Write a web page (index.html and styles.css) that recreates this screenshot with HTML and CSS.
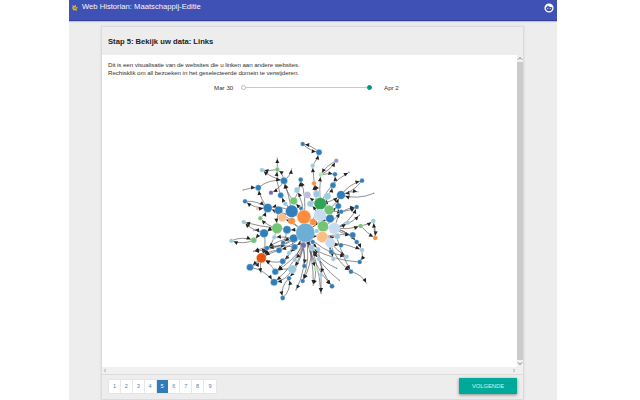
FILE: index.html
```html
<!DOCTYPE html>
<html lang="nl">
<head>
<meta charset="utf-8">
<title>Web Historian: Maatschappij-Editie</title>
<link rel="stylesheet" href="styles.css">
</head>
<body>
<div class="app">
  <header class="bar">
    <svg class="logo" viewBox="0 0 8 8"><path d="M1 1l2 1 2-1 0 2 2 .5-1.500 1.500.5 2-2-1-2 .5V5L.5 4 2 3z" fill="#d8bd32"/><path d="M2.500 4h3" stroke="#5d6535"/></svg>
    <h1>Web Historian: Maatschappij-Editie</h1>
    <svg class="face" viewBox="0 0 24 24"><path fill="#fff" d="M9 11.750a1.250 1.250 0 1 0 0 2.500 1.250 1.250 0 0 0 0-2.500zm6 0a1.250 1.250 0 1 0 0 2.500 1.250 1.250 0 0 0 0-2.500zM12 1a11 11 0 1 0 0 22 11 11 0 0 0 0-22zm0 19c-4.410 0-8-3.590-8-8 0-.29.020-.58.050-.86 2.360-1.050 4.230-2.980 5.210-5.370a9.970 9.970 0 0 0 10.410 3.970A8 8 0 0 1 12 20z"/></svg>
  </header>
  <main class="card">
    <h2>Stap 5: Bekijk uw data: Links</h2>
    <div class="view">
      <div class="content">
        <p>Dit is een visualisatie van de websites die u linken aan andere websites.<br>Rechtsklik om all bezoeken in het geselecteerde domein te verwijderen.</p>
        <div class="range"><span>Mar 30</span><div class="track"><i class="knob"></i><i class="line"></i><i class="knob end"></i></div><span>Apr 2</span></div>
        <svg class="graph" id="graph" viewBox="220 130 170 180"></svg>
      </div>
      <div class="vscroll">
        <svg viewBox="0 0 6 7"><path d="M1 4.500l2-2 2 2" /></svg>
        <div class="thumb"></div>
        <svg viewBox="0 0 6 7"><path d="M1 2.500l2 2 2-2" /></svg>
      </div>
      <div class="hscroll">
        <svg viewBox="0 0 6 7"><path d="M4 2l-2 1.500 2 1.500" /></svg>
        <svg viewBox="0 0 6 7"><path d="M2 2l2 1.500-2 1.500" /></svg>
      </div>
    </div>
    <footer>
      <nav class="pages"><a>1</a><a>2</a><a>3</a><a>4</a><a class="on">5</a><a>6</a><a>7</a><a>8</a><a>9</a></nav>
      <button>VOLGENDE</button>
    </footer>
  </main>
</div>
<script src="graph.js"></script>
</body>
</html>
```
FILE: styles.css
```css
* { box-sizing: border-box; }
body { margin: 0; background: #fff; font-family: "Liberation Sans", Arial, sans-serif; color: #333; height: 400px; overflow: hidden; }
.app { width: 488px; height: 400px; margin-left: 69px; background: #ededed; overflow: hidden; }
.bar { height: 21px; background: #3f51b5; border-bottom: 1px solid #3140a4; box-shadow: 0 1px 1px #bfc2d2; display: flex; align-items: flex-start; padding: 3px 3px 0 2px; }
.logo { width: 8px; height: 8px; margin-top: 1px; }
h1 { margin: -1px 0 0 3px; font-size: 7.650px; line-height: 10px; font-weight: 400; color: #f4f5ff; white-space: nowrap; }
.face { width: 10px; height: 10px; margin-left: auto; }
.card { width: 421px; height: 372px; margin: 6px 0 0 33px; box-shadow: 0 0 2px 1px #d3d3d3; display: flex; flex-direction: column; background: #ededed; }
h2 { margin: 0; height: 28px; flex: none; padding: 1px 0 0 6px; font-size: 7.650px; line-height: 27px; font-weight: 700; color: #222; }
.view { height: 320px; flex: none; display: grid; grid-template-columns: 415px 6px; grid-template-rows: 312px 7px; background: #fff; border-bottom: 1px solid #dcdcdc; }
.content { overflow: hidden; display: flex; flex-direction: column; }
p { margin: 6px 0 0 6px; font-size: 6.200px; line-height: 8px; letter-spacing: -.078px; white-space: nowrap; }
.range { display: flex; align-items: center; height: 8px; flex: none; margin: 6px 0 0 112px; font-size: 6.200px; }
.range span:first-child { width: 27px; }
.track { display: flex; align-items: center; width: 131px; margin-right: 12px; }
.knob { width: 5px; height: 5px; border: 1px solid #bdbdbd; border-radius: 50%; background: #fff; }
.knob.end { background: #009688; border-color: #009688; }
.line { flex: 1; height: 1px; background: #c8c8c8; }
.graph { width: 170px; height: 180px; flex: none; margin: 39px 0 0 118px; }
.edge { fill: none; stroke: #555; stroke-width: .65; }
.vscroll { display: flex; flex-direction: column; background: #f0f0f0; grid-row: 1; grid-column: 2; }
.vscroll svg, .hscroll svg { width: 6px; height: 7px; fill: none; stroke: #555; stroke-width: .8; }
.thumb { flex: 1; background: #cbcbcb; }
.hscroll { display: flex; justify-content: space-between; background: #f0f0f0; grid-row: 2; grid-column: 1 / 3; padding-right: 6px; }
.hscroll svg { stroke: #aaa; }
footer { flex: 1; display: flex; justify-content: space-between; align-items: flex-start; padding: 3px 6px 0; }
.pages { display: flex; margin: 2px 0 0 1px; height: 13px; background: #fff; box-shadow: 0 0 0 .5px #ddd; }
.pages a { width: 11.900px; text-align: center; font-size: 5.600px; line-height: 13px; color: #4b86bb; border-right: 1px solid #e8e8e8; }
.pages a:last-child { border: 0; }
.pages .on { background: #337ab7; color: #fff; border-color: #337ab7; }
button { width: 58px; height: 16px; border: 0; padding: 0; background: #00a99a; color: #d6f3ef; font: 5.800px/16px "Liberation Sans", Arial, sans-serif; box-shadow: 0 1px 3px #888; }
```
FILE: graph.js
```js
const palette = {
  b: '#2f7fbd', l: '#9ecae1', g: '#74c476', p: '#756bb1', q: '#9e8fce',
  o: '#fd8d3c', a: '#fdbe85', r: '#e6550d', d: '#31a354', v: '#bcbddc',
  w: '#c6dbef', e: '#b9e5ae', m: '#6baed6'
};

// x, y, radius, colour
const nodes = `302.7,144,2,b 319,152.3,2.8,b 312.7,165.7,2,l 336.3,160.7,2,q 261.9,170,2,l 277.3,169.5,2,g
277.3,157.7,.8,l 291.7,168.5,.8,l 284,180.7,3.3,b 300.7,179.7,2.1,b 258.3,187.7,2.7,b 243.3,190,.8,b 271,192.7,2,p
280.7,195.3,2.7,b 297,190,2.7,l 293.7,201,3.6,g 245,201.3,2.1,b 267.7,208,4.2,b 278.7,210.3,3.8,b 256.7,209,.7,o
285.3,203.7,2,l 301,208.3,1.7,b 260.3,218.3,2,g 320.7,174.7,2,e 314,183.3,2,o 335,174.3,2.1,b 349,172.3,.8,b
362,180.7,2.1,b 333,185.3,2.7,b 358.3,191.7,.8,l 373.7,193.3,.8,b 341,195,4.1,b 307.3,195,3.3,v 316.7,194,3.3,l
327.3,196.3,3.3,l 310.3,203.7,3,l 338.3,206,2.8,b 356.7,207,2.1,b 341.3,211.7,2,b 359.3,215.3,.8,b 373.3,221,2.1,l
330,218.5,4,b 243.7,222,2,l 277,228.3,5.100,g 264,233.3,4,b 231.3,240.7,2,l 253.7,240.3,2.7,g 253.7,230,.8,b
287,229.7,3.7,b 291.7,221,3.3,o 293.7,238.3,3.9,b 274.3,237.3,2,l 267,248,2.1,b 279,250.3,2.7,b 283,242.7,2,b
294.7,247,2.8,b 303.3,245.3,2.7,p 253.7,251.3,.8,b 261.3,258,4.7,r 250,267.3,3.3,b 282.7,261.3,2.7,b 289,253,2,l
294.7,259.7,2,l 292.3,269.3,4,l 275.3,271.7,3,b 274,282.3,3.3,b 289,278.3,2.1,b 282.7,298,2.2,b 296,290,.8,b
302.7,281,2,b 304.3,266,2,b 261,273.3,.6,l 347.7,222.7,2,l 360.7,226,2.1,g 375.3,238,2.1,o 352.7,235,2.8,b
356.7,242,2.1,b 337.3,236.3,2.7,l 362,250,2.1,l 359.7,262,2.1,b 341,245.3,2.1,b 331,251.7,2.1,b 346.7,256.7,2,l
333.3,259,2,l 351,271.7,2.1,b 366.7,283.7,.8,l 336.7,268.3,.8,b 339.3,280.3,.8,b 332,286.3,2.2,b 321,275,2,l
321,293.3,.8,p 315.7,268.7,2,e 313.3,285.3,.8,g 311.7,248,2.7,l 318.7,259,2,l 318.3,249.3,2,l 312.7,242,2,b
316.7,231,2,l 282.3,217.5,4,a 291.7,211.3,6,b 304,217,6.700,o 313,222,3.2,o 320.3,203.7,6,d 329,210,4.600,g
320,215.3,5.800,w 323,226.3,5.200,g 334.3,228.3,5.500,w 322.3,237,5.400,a 330,242.7,4.700,w 305.3,232.7,9.2,m`
  .split(/\s+/).map(s => s.split(','));

// x1, y1, x2, y2, bend
const edges = `302.7,144,319,152.3,2 319,152.3,302.7,144,2 312.7,165.7,319,152.3,1 316.7,194,312.7,165.7,-1
320.7,174.7,336.3,160.7,2 336.3,160.7,320.7,174.7,2 320.7,174.7,335,174.3,-1 320.3,203.7,320.7,174.7,-1
284,180.7,261.9,170,-2 277.3,169.5,261.9,170,-1 277.3,169.5,277.3,157.7,0 284,180.7,277.3,169.5,2 291.7,211.3,277.3,169.5,-7
284,180.7,291.7,168.5,2 291.7,211.3,284,180.7,1 258.3,187.7,284,180.7,-4 243.3,190,258.3,187.7,-1 284,180.7,271,192.7,-2
267.7,208,258.3,187.7,-2 245,201.3,267.7,208,-3 267.7,208,245,201.3,-3 256.7,209,267.7,208,0 260.3,218.3,267.7,208,1
291.7,211.3,280.7,195.3,-1 293.7,201,284,180.7,-2 293.7,201,300.7,179.7,2 304,217,300.7,179.7,3 304,217,297,190,2
304,217,293.7,201,1 316.7,194,314,183.3,1 323,226.3,314,183.3,-2 327.3,196.3,333,185.3,1 333,185.3,335,174.3,1
320.3,203.7,349,172.3,-5 341,195,362,180.7,-3 362,180.7,341,195,-3 341,195,358.3,191.7,-2 373.7,193.3,341,195,-4
320.3,203.7,341,195,2 329,210,338.3,206,1 334.3,228.3,338.3,206,2 341.3,211.7,356.7,207,-1 329,210,356.7,207,4
334.3,228.3,356.7,207,5 334.3,228.3,359.3,215.3,3 323,226.3,341.3,211.7,2 323,226.3,327.3,196.3,0 305.3,232.7,320.3,203.7,1
334.3,228.3,347.7,222.7,1 334.3,228.3,360.7,226,2 360.7,226,373.3,221,1 373.3,221,375.3,238,-1 375.3,238,373.3,221,0 360.7,226,375.3,238,1
334.3,228.3,352.7,235,2 322.3,237,352.7,235,-2 334.3,228.3,356.7,242,-3 334.3,228.3,362,250,-6 330,242.7,362,250,-2
362,250,359.7,262,-2 359.7,262,311.7,248,-4 322.3,237,341,245.3,2 330,242.7,346.7,256.7,1 305.3,232.7,346.7,256.7,6
322.3,237,331,251.7,-2 322.3,237,333.3,259,-2 334.3,228.3,351,271.7,2 351,271.7,366.7,283.7,-3 330,242.7,351,271.7,4
336.7,268.3,311.7,248,-3 339.3,280.3,311.7,248,-3 318.3,249.3,332,286.3,4 305.3,232.7,332,286.3,6 318.7,259,321,275,-2
321,275,321,293.3,0 305.3,232.7,321,293.3,-4 305.3,232.7,315.7,268.7,1 315.7,268.7,313.3,285.3,-1 305.3,232.7,313.3,285.3,-3
305.3,232.7,302.7,281,-5 303.3,245.3,304.3,266,-1 303.3,245.3,296,290,-5 311.7,248,302.7,281,-3 305.3,232.7,289,278.3,-5
303.3,245.3,292.3,269.3,-2 294.7,247,282.7,261.3,-1 293.7,238.3,275.3,271.7,-5 303.3,245.3,275.3,271.7,-3
292.3,269.3,275.3,271.7,2 292.3,269.3,274,282.3,-4 305.3,232.7,274,282.3,-7 289,278.3,282.7,298,4 282.7,298,289,278.3,4
250,267.3,274,282.3,-4 275.3,271.7,261.3,258,2 261.3,258,250,267.3,0 250,267.3,261.3,258,2 282.7,261.3,261.3,258,-3
279,250.3,261.3,258,1 279,250.3,261.3,258,3 267,248,261.3,258,1 264,233.3,261.3,258,-3 277,228.3,261.3,258,-3
261.3,258,261,273.3,1 305.3,232.7,279,250.3,-3 305.3,232.7,267,248,-4 287,229.7,279,250.3,-2
293.7,238.3,267,248,3 294.7,247,253.7,251.3,4 293.7,238.3,253.7,251.3,-4 293.7,238.3,274.3,237.3,1
231.3,240.7,253.7,240.3,-3 253.7,240.3,231.3,240.7,-3 264,233.3,253.7,240.3,1 264,233.3,253.7,230,1 264,233.3,243.7,222,-2
277,228.3,243.7,222,-1 277,228.3,260.3,218.3,-2 277,228.3,264,233.3,1 287,229.7,264,233.3,4 278.7,210.3,277,228.3,1
305.3,232.7,282.3,217.5,1 305.3,232.7,278.7,210.3,0 291.7,211.3,267.7,208,3 304,217,267.7,208,-2 305.3,232.7,293.7,238.3,1
305.3,232.7,303.3,245.3,0 305.3,232.7,294.7,247,-2 305.3,232.7,311.7,248,1 305.3,232.7,312.7,242,1 305.3,232.7,294.7,259.7,-4
305.3,232.7,289,253,-2 323,226.3,310.3,203.7,2 320,215.3,307.3,195,2 329,210,341,195,1 305.3,232.7,330,218.5,-2
305.3,232.7,329,210,2 305.3,232.7,322.3,237,1 305.3,232.7,287,229.7,1 304,217,291.7,211.3,0 305.3,232.7,318.3,249.3,1
305.3,232.7,318.7,259,2 322.3,237,337.3,236.3,1 323,226.3,334.3,228.3,1 313,222,320,215.3,1 305.3,232.7,283,242.7,2`
  .split(/\s+/).map(s => s.split(',').map(Number));

function radiusAt(x, y) {
  const hit = nodes.find(n => Math.abs(n[0] - x) < .5 && Math.abs(n[1] - y) < .5);
  return hit ? +hit[2] : 1;
}

let markup = '';
for (const [x1, y1, x2, y2, bend] of edges) {
  const length = Math.hypot(x2 - x1, y2 - y1);
  const cx = (x1 + x2) / 2 - (y2 - y1) / length * bend * 1.500;
  const cy = (y1 + y2) / 2 + (x2 - x1) / length * bend * 1.500;
  markup += `<path class="edge" d="M${x1} ${y1}Q${cx} ${cy} ${x2} ${y2}"/>`;
  const angle = Math.atan2(y2 - cy, x2 - cx);
  const gap = radiusAt(x2, y2) + .5;
  const tx = x2 - Math.cos(angle) * gap, ty = y2 - Math.sin(angle) * gap;
  markup += `<path transform="translate(${tx} ${ty}) rotate(${angle * 180 / Math.PI})" d="M0 0L-4-2V2Z" fill="#222"/>`;
}
for (const [x, y, r, c] of nodes) {
  const radius = r < 1 ? r : +r + .25;
  markup += `<circle cx="${x}" cy="${y}" r="${radius}" fill="${palette[c]}" stroke="#fff" stroke-width=".3"/>`;
}
document.getElementById('graph').innerHTML = markup;
```
